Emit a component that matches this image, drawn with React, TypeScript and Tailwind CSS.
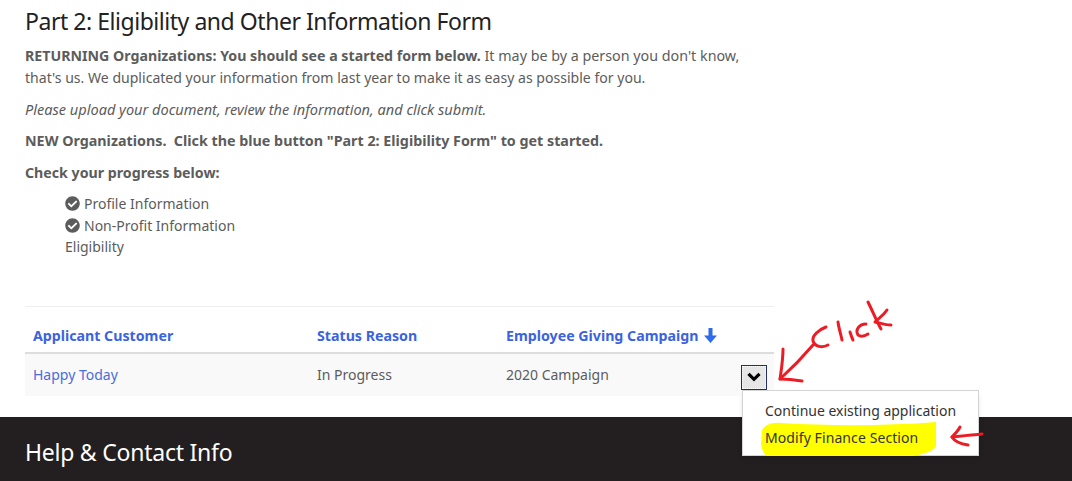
import React from "react";
import { FaCheckCircle } from "react-icons/fa";

const progress = [
  { label: "Profile Information", done: true },
  { label: "Non-Profit Information", done: true },
  { label: "Eligibility", done: false },
];

function Annotations() {
  return (
    <svg
      className="absolute top-0 left-0 pointer-events-none"
      width="1072"
      height="481"
      fill="none"
      stroke="#ed1c24"
      strokeWidth="3"
      strokeLinecap="round"
      strokeLinejoin="round"
    >
      {/* big arrow */}
      <path d="M813 345 C802 358 790 370 780 379" />
      <path d="M783 349 C783 360 781 372 780 379 C788 379 796 380 802 381" />
      {/* click */}
      <path d="M826 327 C818 330 812 336 813 341 C815 347 822 348 828 345" />
      <path d="M838 322 C839 329 841 335 842 340" />
      <path d="M850 332 C851 335 852 338 853 340" />
      <path d="M866 324 C859 324 855 330 858 335 C861 337 865 336 868 334" />
      <path d="M868 302 C873 312 877 322 881 329" />
      <path d="M887 310 C883 316 878 319 875 322 C880 323 885 325 891 325" />
      {/* small arrow */}
      <path d="M982 434 C972 435 960 436 952 437" />
      <path d="M960 427 C958 431 955 434 952 437 C955 442 961 444 968 445" />
    </svg>
  );
}

export default function App() {
  return (
    <div className="relative w-[1072px] h-[481px] overflow-hidden bg-white font-['Noto_Sans',sans-serif] text-[14.3px] text-[#5c5c5c]">
      <section className="h-[417px] px-[25px] pt-[5px]">
        <h1 className="text-[23px] leading-[32px] text-[#222222] tracking-[-0.46px]">
          Part 2: Eligibility and Other Information Form
        </h1>

        <div className="w-[749px] mt-[8px]">
          <p className="leading-[22px]">
            <strong className="text-[14.2px]">RETURNING Organizations: You should see a started form below.</strong> It
            may be by a person you don't know, <span className="text-[14.07px]">that's us. We duplicated your information from last year to make it as easy as
            possible for you.</span>
          </p>
          <p className="mt-[9px] leading-[22px] italic text-[14.55px]">
            Please upload your document, review the information, and click submit.
          </p>
          <p className="mt-[10px] leading-[22px] font-bold whitespace-pre">
            NEW Organizations.  Click the blue button "Part 2: Eligibility Form" to get started.
          </p>
          <p className="mt-[10px] leading-[22px] font-bold text-[14.2px]">Check your progress below:</p>

          <ul className="mt-[8px] pl-[40px] text-[14px]">
            {progress.map((item) => (
              <li key={item.label} className="flex items-center gap-[4px] h-[22px] last:h-[21px] last:pb-[1px]">
                {item.done && <FaCheckCircle className="w-[15px] h-[15px] text-[#5c5c5c]" />}
                <span>{item.label}</span>
              </li>
            ))}
          </ul>
        </div>

        <div className="w-[749px] mt-[49px] border-t border-[#eeeeee]">
          <div className="flex items-center h-[47px] pt-[13px] border-b-2 border-[#dddddd] font-bold text-[14.2px] text-[#3b63e0]">
            <span className="w-[292px] pl-[8px]">Applicant Customer</span>
            <span className="w-[189px]">Status Reason</span>
            <span className="flex items-center gap-[6px]">
              Employee Giving Campaign
              <svg width="13" height="15" viewBox="0 0 13 15" fill="#2f6bea">
                <path d="M4.5 0h4v7.5H13L6.5 15 0 7.5h4.5z" />
              </svg>
            </span>
          </div>
          <div className="flex items-center h-[42px] pb-[2px] bg-[#f9f9f9] text-[14px]">
            <span className="w-[292px] pl-[8px] text-[#4a6ddc]">Happy Today</span>
            <span className="w-[189px]">In Progress</span>
            <span className="w-[236px]">2020 Campaign</span>
            <button className="flex items-center justify-center w-[24px] h-[23px] mt-[6px] bg-[#e6e6e6] border border-dotted border-white outline outline-1 outline-[#1f2f6e]">
              <svg width="14" height="10" viewBox="0 0 14 10" fill="none" stroke="#000000" strokeWidth="3.2">
                <path d="M1.5 1.8 7 7.3l5.5-5.5" />
              </svg>
            </button>
          </div>
        </div>
      </section>

      <footer className="h-[64px] bg-[#231f20] px-[25px] pt-[18px]">
        <h2 className="text-[23px] leading-[34px] text-white tracking-[-0.24px]">Help &amp; Contact Info</h2>
      </footer>

      <div className="absolute left-[742px] top-[390px] w-[237px] h-[66px] bg-white border border-[#d4d4d4] shadow-md pl-[22px] pt-[9px] text-[14px] text-[#333333]">
        <svg className="absolute left-[18px] top-[31px]" width="176" height="34" viewBox="0 0 176 34" fill="#ffff00">
          <path d="M1 8 C4 3 10 0 20 1 C70 4 125 4 175 0 L175 25 C170 30 160 33 150 34 L6 34 C3 33 1 28 0 22 Z" />
        </svg>
        <div className="leading-[21px] whitespace-nowrap">Continue existing application</div>
        <div className="relative mt-[6px] leading-[21px] whitespace-nowrap tracking-[0.09px]">
          Modify Finance Section
        </div>
      </div>

      <Annotations />
    </div>
  );
}
